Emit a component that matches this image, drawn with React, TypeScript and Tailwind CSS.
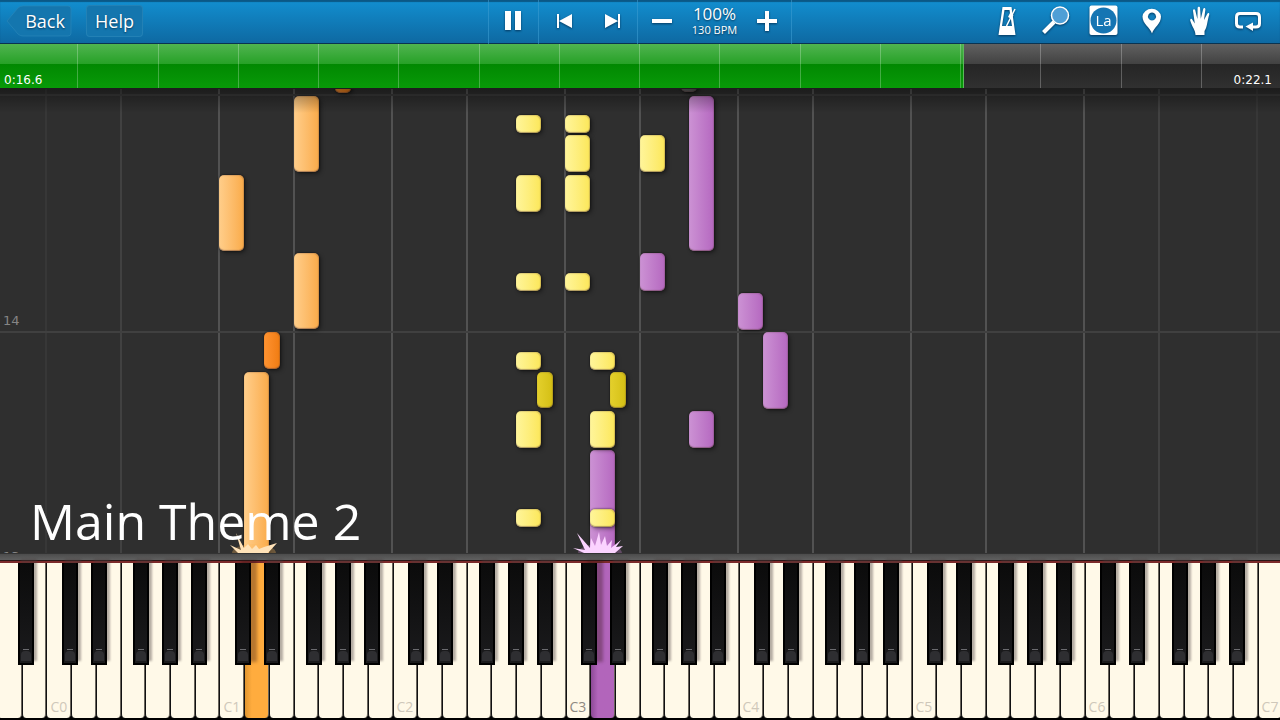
import React, { FC, ReactNode } from 'react';

type Tone = 'orange' | 'darkOrange' | 'yellow' | 'darkYellow' | 'purple' | 'gray';

interface Note {
  lane: number; // index of a white key, or of the key right of the black one
  sharp?: string;
  top: number;
  height: number;
  tone: Tone;
}

const WHITE_KEYS = 52;
const LETTERS = ['A', 'B', 'C', 'D', 'E', 'F', 'G'];

// How far each black note starts before the edge between its neighbours
const SHARP_SHIFT: Record<string, number> = { C: -9, D: -5, F: -11, G: -8, A: -4 };

const BLACK_POSITION: Record<string, string> = {
  C: '-right-[7px]',
  D: '-right-[11px]',
  F: '-right-[4px]',
  G: '-right-[8px]',
  A: '-right-[12px]',
};

const TONES: Record<Tone, string> = {
  orange: 'from-[#ffce8a] to-[#faab48]',
  darkOrange: 'from-[#ff9330] to-[#f07c10]',
  yellow: 'from-[#fff59a] to-[#fce758]',
  darkYellow: 'from-[#e4d02c] to-[#d4bf12]',
  purple: 'from-[#cc92d4] to-[#b568c0]',
  gray: 'from-[#6a6a6a] to-[#555555]',
};

const NOTES: Note[] = [
  { lane: 12, top: 7, height: 76, tone: 'orange' },
  { lane: 9, top: 86, height: 76, tone: 'orange' },
  { lane: 12, top: 164, height: 76, tone: 'orange' },
  { lane: 14, sharp: 'G', top: -10, height: 14, tone: 'darkOrange' },
  { lane: 11, sharp: 'D', top: 243, height: 37, tone: 'darkOrange' },
  { lane: 10, top: 283, height: 190, tone: 'orange' },
  { lane: 21, top: 26, height: 18, tone: 'yellow' },
  { lane: 21, top: 86, height: 37, tone: 'yellow' },
  { lane: 21, top: 184, height: 18, tone: 'yellow' },
  { lane: 21, top: 263, height: 18, tone: 'yellow' },
  { lane: 21, top: 322, height: 37, tone: 'yellow' },
  { lane: 21, top: 420, height: 18, tone: 'yellow' },
  { lane: 22, sharp: 'A', top: 283, height: 36, tone: 'darkYellow' },
  { lane: 23, top: 26, height: 18, tone: 'yellow' },
  { lane: 23, top: 46, height: 37, tone: 'yellow' },
  { lane: 23, top: 86, height: 37, tone: 'yellow' },
  { lane: 23, top: 184, height: 18, tone: 'yellow' },
  { lane: 24, top: 361, height: 110, tone: 'purple' },
  { lane: 24, top: 263, height: 18, tone: 'yellow' },
  { lane: 24, top: 322, height: 37, tone: 'yellow' },
  { lane: 24, top: 420, height: 18, tone: 'yellow' },
  { lane: 25, sharp: 'D', top: 283, height: 36, tone: 'darkYellow' },
  { lane: 26, top: 46, height: 37, tone: 'yellow' },
  { lane: 26, top: 164, height: 38, tone: 'purple' },
  { lane: 28, sharp: 'G', top: -10, height: 13, tone: 'gray' },
  { lane: 28, top: 7, height: 155, tone: 'purple' },
  { lane: 28, top: 322, height: 37, tone: 'purple' },
  { lane: 30, top: 204, height: 37, tone: 'purple' },
  { lane: 31, top: 243, height: 77, tone: 'purple' },
];

const noteLeft = ({ lane, sharp }: Note) =>
  `calc(${(lane / WHITE_KEYS) * 100}% + ${sharp ? SHARP_SHIFT[sharp] : 0}px)`;

const keys = Array.from({ length: WHITE_KEYS }, (_, i) => ({
  index: i,
  letter: LETTERS[i % 7],
  octave: Math.floor((i - 2) / 7),
}));

const laneBorder = (index: number, letter: string) => {
  if (letter !== 'C' && letter !== 'F') return '';
  if (index < 3 || index > 50) return 'border-l-2 border-[#373737]';
  if (index < 6 || index > 46) return 'border-l-2 border-[#414141]';
  return 'border-l-2 border-[#525252]';
};

const keyColor = (index: number) => {
  if (index === 10) return 'bg-gradient-to-r from-[#e0952f] via-[#ffac3e] via-30% to-[#ffac3e]';
  if (index === 24) return 'bg-gradient-to-r from-[#8d4a97] via-[#b265bb] via-30% to-[#b265bb]';
  return 'bg-[#fff9e8]';
};

const IconButton: FC<{ label: string; children: ReactNode }> = ({ label, children }) => (
  <button type="button" aria-label={label} className="h-11 w-12">
    <svg viewBox="0 0 48 44" className="h-11 w-12 fill-white drop-shadow-[0_1px_1px_rgba(0,30,60,0.7)]">
      {children}
    </svg>
  </button>
);

const Toolbar: FC = () => (
  <header className="grid h-11 shrink-0 grid-cols-[1fr_auto_1fr] border-b border-[#0a3350] bg-gradient-to-b from-[#128fd0] to-[#0e69a2] text-white shadow-[inset_0_2px_1px_#0b5886]">
    <nav className="flex items-center gap-3.5 pb-0.5 pl-1.5 text-lg">
      <button type="button" className="relative h-8 w-[66px] pl-3">
        <svg viewBox="0 0 66 32" className="absolute inset-0 h-8 w-[66px]">
          <path
            d="M1 16 L12 3 Q14 1 17 1 H62 Q65 1 65 4 V28 Q65 31 62 31 H17 Q14 31 12 29 Z"
            fill="#1476ae"
            stroke="#2a86b8"
            strokeOpacity="0.7"
          />
        </svg>
        <span className="relative [text-shadow:0_1px_2px_#06395c]">Back</span>
      </button>
      <button
        type="button"
        className="h-8 rounded border border-[#2a86b8]/70 bg-[#1476ae] px-2 [text-shadow:0_1px_2px_#06395c]"
      >
        Help
      </button>
    </nav>

    <div className="flex border-x border-[#3a9bd0]/60">
      <div className="flex w-[50px] justify-center border-r border-[#3a9bd0]/60">
        <IconButton label="Pause">
          <path d="M15 11h6v19h-6zM25 11h6v19h-6z" />
        </IconButton>
      </div>
      <div className="flex w-[99px] border-r border-[#3a9bd0]/60">
        <IconButton label="Previous">
          <path d="M18 14h2v14h-2zM20 21 L33 14 V28 Z" />
        </IconButton>
        <IconButton label="Next">
          <path d="M31 14h2v14h-2zM31 21 L18 14 V28 Z" />
        </IconButton>
      </div>
      <div className="flex w-[153px] justify-between">
        <IconButton label="Slower">
          <path d="M14 19h20v4h-20z" />
        </IconButton>
        <div className="flex flex-col items-center pt-1 whitespace-nowrap [text-shadow:0_1px_2px_#06395c]">
          <span className="text-[17px] leading-5">100%</span>
          <span className="text-[11px] leading-3">130 BPM</span>
        </div>
        <IconButton label="Faster">
          <path d="M14 19h8v-8h4v8h8v4h-8v8h-4v-8h-8z" />
        </IconButton>
      </div>
    </div>

    <div className="flex justify-end pr-2">
      <IconButton label="Metronome">
        <path fillRule="evenodd" d="M18.5 7 H27.5 L31.5 35 H14.5 Z M20.5 10 L18 26 H28 L25.5 10 Z" />
        <path d="M31 9 L22.5 26" stroke="white" strokeWidth="1.5" fill="none" />
        <path d="M26 13 l3.5 2 l-2 4 l-3.5 -2 z" />
      </IconButton>
      <IconButton label="Zoom">
        <path d="M22 22 L11.5 32.5" stroke="white" strokeWidth="4" />
        <circle cx="28" cy="15.5" r="8.5" fill="#4f9fd6" stroke="white" strokeWidth="1.5" />
      </IconButton>
      <IconButton label="Note names">
        <rect x="9.5" y="5.5" width="28" height="29.5" rx="2" />
        <circle cx="23.5" cy="20.5" r="13" fill="#1575b3" />
        <text x="23.5" y="26" textAnchor="middle" fontSize="15">La</text>
      </IconButton>
      <IconButton label="Markers">
        <path
          fillRule="evenodd"
          d="M24 33.5 C22 27 14.5 24 14.5 16.5 A9.3 8.7 0 0 1 33 16.5 C33 24 26 27 24 33.5 Z M24 12.5 a4 4 0 1 0 0.01 0 Z"
        />
      </IconButton>
      <IconButton label="Hands">
        <path d="M19.5 35 C19.5 30 16 27 14.2 20.5 C14 18.5 15.8 18.3 16.5 20 L18.8 23.5 L17 11 C16.8 9 18.8 8.7 19.3 10.5 L21.4 19 L21.6 8 C21.7 6.2 24 6.2 24.1 8 L24.8 18.8 L27.2 9 C27.7 7.3 29.6 7.7 29.4 9.5 L28 20 L31.2 14 C32 12.4 33.8 13 33.2 14.8 C31.5 20 31 28 28.5 31 L28.5 35 Z" />
      </IconButton>
      <IconButton label="Loop">
        <path
          d="M19 27 H16 Q12.5 27 12.5 23.5 V17 Q12.5 13.5 16 13.5 H32 Q35.5 13.5 35.5 17 V23.5 Q35.5 27 32 27 H28"
          fill="none"
          stroke="white"
          strokeWidth="3"
        />
        <path d="M21.5 26.5 L29 22.5 V31 Z" />
      </IconButton>
    </div>
  </header>
);

const Timeline: FC = () => (
  <section className="relative h-[45px] shrink-0 overflow-hidden border-b border-[#1d1d1d] bg-[linear-gradient(#606060_0%,#424242_45%,#252525_45%,#303030_100%)] font-['DejaVu_Sans',sans-serif] text-xs text-white">
    <div
      className="absolute inset-y-0 left-0 border-r border-[#5cb85c] bg-[linear-gradient(#50b450_0%,#27a127_45%,#018801_45%,#089a08_100%)]"
      style={{ width: `${(964 / 1280) * 100}%` }}
    />
    <div className="relative -mx-0.5 flex h-full">
      {Array.from({ length: 16 }, (_, i) => (
        <div key={i} className="flex-1 border-r border-white/25" />
      ))}
    </div>
    <span className="absolute bottom-0 left-1 leading-4">0:16.6</span>
    <span className="absolute right-2 bottom-0 leading-4">0:22.1</span>
  </section>
);

const Spark: FC<{ lane: number; color: string; glow: string; low?: boolean }> = ({ lane, color, glow, low }) => (
  <svg
    viewBox="0 0 60 24"
    className="absolute bottom-0 h-6 w-[60px] -translate-x-1/2"
    style={{ left: `${((lane + 0.4) / WHITE_KEYS) * 100}%` }}
  >
    <ellipse cx="30" cy="24" rx="22" ry="9" fill={glow} opacity="0.3" />
    {low ? (
      <path
        d="M14 24 L6 16 L17 21 L12 4 L20 19 L24 15 L28 20 L32 16 L35 20 L40 18 L53 14 L44 24 Z"
        fill={color}
      />
    ) : (
      <path
        d="M14 24 L3 19 L15 21 L7 4 L20 19 L21 9 L25 17 L29 3 L31 16 L35 7 L37 17 L42 11 L41 19 L51 11 L46 18 L53 17 L45 24 Z"
        fill={color}
      />
    )}
  </svg>
);

const NoteRoll: FC = () => (
  <main className="relative flex min-h-96 flex-1 overflow-hidden bg-[#2f2f2f]">
    <div className="-mr-0.5 -ml-[3px] flex flex-1">
      {keys.map(({ index, letter }) => (
        <div key={index} className={`flex-1 ${laneBorder(index, letter)}`} />
      ))}
    </div>
    <div className="absolute inset-x-0 top-[5px] h-0.5 bg-[#3b3b3b]" />
    <div className="absolute inset-x-0 top-[242px] h-0.5 bg-[#404040]" />
    <span className="absolute top-[222px] left-[3px] font-['DejaVu_Sans',sans-serif] text-[13px] leading-5 text-[#858585]">
      14
    </span>
    <span className="absolute top-[458px] left-[3px] font-['DejaVu_Sans',sans-serif] text-[13px] leading-5 text-[#858585]">
      13
    </span>
    <div className="absolute inset-y-0 -right-0.5 -left-[3px]">
      {NOTES.map((note, i) => (
        <div
          key={i}
          className={`absolute rounded-[5px] bg-gradient-to-r shadow-[inset_0_-1px_1px_rgba(90,60,60,0.5),inset_-1px_1px_1px_rgba(90,60,60,0.2),0_0_2px_rgba(0,0,0,0.7),2px_2px_4px_rgba(0,0,0,0.4)] ${
            note.sharp ? 'w-4' : 'w-[25px]'
          } ${TONES[note.tone]}`}
          style={{ left: noteLeft(note), top: note.top, height: note.height }}
        />
      ))}
      <Spark lane={10} color="#ffe2b8" glow="#ffb95c" low />
      <Spark lane={24} color="#fbd3ff" glow="#d68be0" />
    </div>
    <div className="absolute inset-x-0 top-0 h-6 bg-gradient-to-b from-black/40 to-transparent" />
    <h1 className="absolute bottom-0 left-[30px] font-['Open_Sans','Noto_Sans',sans-serif] text-[50px] leading-[64px] whitespace-nowrap text-white">
      Main Theme 2
    </h1>
  </main>
);

const Keyboard: FC = () => (
  <section className="shrink-0 overflow-hidden bg-black">
    <div className="h-[7px] border-t border-[#333333] bg-gradient-to-b from-[#4c4c4c] to-[#606060]" />
    <div className="h-[3px] border-t border-[#2a1616] bg-[#7c2a2a]" />
    <div className="-mr-0.5 -ml-[3px] flex h-[157px] pb-0.5">
      {keys.map(({ index, letter, octave }) => (
        <div key={index} className="relative flex-1">
          <button
            type="button"
            aria-label={`${letter}${octave}`}
            aria-pressed={index === 10 || index === 24}
            className={`flex h-full w-full items-end justify-center rounded-b border-x border-r-[#6a655c] border-l-[#111111] pb-[3px] text-sm leading-4 ${keyColor(index)} ${
              octave === 3 ? 'text-[#8f8a82]' : 'text-[#cfc8ba]'
            }`}
          >
            {letter === 'C' && <span>{`C${octave}`}</span>}
          </button>
          {letter in BLACK_POSITION && index < WHITE_KEYS - 1 && (
            <button
              type="button"
              aria-label={`${letter} sharp ${octave}`}
              className={`absolute top-0 z-10 flex h-[102px] w-4 flex-col items-center justify-end border-2 border-t-0 border-black bg-gradient-to-b from-[#0b0b0b] to-[#1b1b1d] pb-0.5 ${
                index === 9 || index === 23
                  ? 'shadow-[6px_-3px_3px_rgba(50,20,20,0.35)]'
                  : 'shadow-[3px_-4px_2px_rgba(70,60,60,0.4)]'
              } ${BLACK_POSITION[letter]}`}
            >
              <span className="h-0.5 w-1.5 border-t border-[#6c6c70]" />
              <span className="h-2.5 w-2.5 rounded-t-sm bg-[#2e2e31]" />
            </button>
          )}
        </div>
      ))}
    </div>
  </section>
);

const App: FC = () => (
  <div className="flex min-h-screen flex-col overflow-hidden bg-black font-['Open_Sans','Noto_Sans',sans-serif]">
    <Toolbar />
    <Timeline />
    <NoteRoll />
    <Keyboard />
  </div>
);

export default App;
